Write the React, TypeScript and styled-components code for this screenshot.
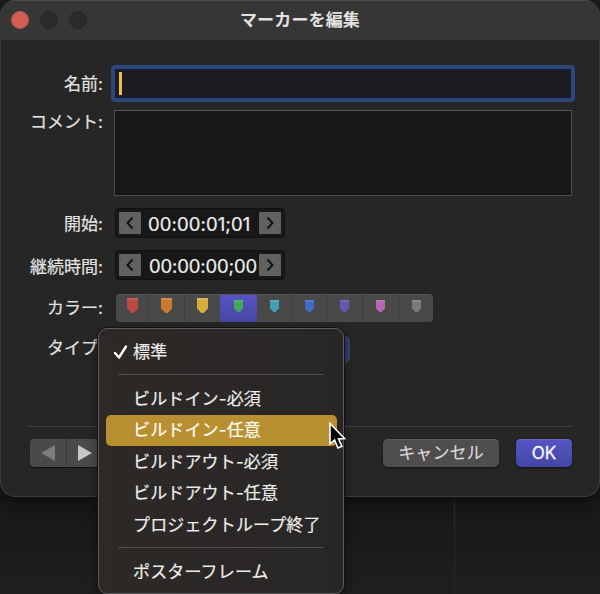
import React from 'react';
import styled, { createGlobalStyle } from 'styled-components';

const Global = createGlobalStyle`
  * { box-sizing: border-box; }
  body { margin: 0; background: #1c1c1c; overflow: hidden; }
  button { font: inherit; letter-spacing: inherit; padding: 0; border: 0; color: inherit; }
`;

const Desktop = styled.main`
  position: relative;
  width: 600px;
  height: 594px;
  overflow: hidden;
  background: linear-gradient(#1b1c20 0, #1b1b1b 20px, #171717 500px, #1f1f1f 594px);
  color: #e2e2e2;
  font: 400 17px/24px Inter, 'Noto Sans CJK JP', sans-serif;
  letter-spacing: 0.15px;
  -webkit-text-stroke: 0.2px;
`;

const PanelEdge = styled.div`
  position: absolute;
  left: 454px;
  top: 497px;
  width: 1px;
  height: 97px;
  background: #282828;
`;

const Dialog = styled.section`
  position: relative;
  height: 497px;
  border-radius: 15px;
  background: #262626;
  overflow: hidden;
  box-shadow: inset 0 0 0 1px #3c3c3c, 0 3px 12px #0008;
`;

const TitleBar = styled.header`
  display: grid;
  grid-template-columns: 100px 1fr 100px;
  align-items: center;
  height: 40px;
  background: #363636;
  border-top: 1px solid #484848;
`;

const Lights = styled.div`
  display: flex;
  gap: 11px;
  padding: 0 0 1px 11px;
`;

const Light = styled.i<{ $active?: boolean }>`
  width: 18px;
  height: 18px;
  border-radius: 50%;
  background: ${p => (p.$active ? '#d15d53' : '#2a2a2a')};
  border: 1px solid ${p => (p.$active ? '#b9544c' : '#272727')};
`;

const Title = styled.h1`
  margin: 0;
  padding-bottom: 2px;
  text-align: center;
  font-size: 17px;
  line-height: 24px;
  font-weight: 700;
  -webkit-text-stroke: 0;
`;

const Form = styled.div`
  display: grid;
  grid-template-columns: 103px 464px;
  grid-template-rows: 45px 98px 42px 44px 42px 90px;
  column-gap: 8px;
  padding-top: 25px;
`;

const Label = styled.label<{ $drop?: number }>`
  text-align: right;
  white-space: nowrap;
  letter-spacing: 0;
  padding-top: ${p => p.$drop ?? 0}px;
`;

const NameField = styled.div`
  display: flex;
  align-items: center;
  height: 37px;
  padding-left: 4px;
  border: 4px solid #2c4677;
  border-radius: 4px;
  background: #1c1b1f;
  box-shadow: inset 0 0 0 1px #14183a;
`;

const Caret = styled.i`
  width: 3px;
  height: 23px;
  background: #f0bd48;
`;

const Comment = styled.div`
  margin-left: 3px;
  width: 458px;
  height: 86px;
  border: 1px solid #4b4b4b;
  border-top-color: #595959;
  background: #171717;
`;

const TimeBox = styled.div`
  display: flex;
  align-items: center;
  width: 170px;
  height: 30px;
  margin-left: 4px;
  padding: 0 3px 1px 3px;
  border: 1px solid #101010;
  border-radius: 4px;
  background: #181818;
`;

const Step = styled.button`
  display: grid;
  place-items: center;
  flex: none;
  width: 22px;
  height: 22px;
  border-radius: 1px;
  background: #616161;
`;

const Time = styled.span<{ $tight?: boolean }>`
  flex: 1;
  white-space: nowrap;
  padding: 3px 0 0 ${p => (p.$tight ? 8 : 7)}px;
  font-size: 18.5px;
  letter-spacing: ${p => (p.$tight ? -0.15 : 0.1)}px;
  color: #efefef;
`;

const Swatches = styled.div`
  display: grid;
  grid-template-columns: 33px 36px 35px 37px 35px 35px 36px 36px 34px;
  width: 317px;
  height: 28px;
  margin-left: 5px;
  border-radius: 4px;
  overflow: hidden;
  background: #494949;
  border-top: 1px solid #555;
`;

const Swatch = styled.button<{ $on?: boolean; $line?: boolean; $top: number }>`
  display: flex;
  justify-content: center;
  align-items: flex-start;
  padding-top: ${p => p.$top}px;
  background: ${p => (p.$on ? 'linear-gradient(#5654c5, #4547a2)' : 'transparent')};
  border-right: ${p => (p.$line ? 1 : 0)}px solid #3e3e3e;
`;

const PopUp = styled.div`
  width: 235px;
  height: 27px;
  margin-left: 4px;
  border: 1px solid #4b4b50;
  border-radius: 5px;
  background: linear-gradient(90deg, #494949 205px, #333d78 205px);
`;

const Rule = styled.hr`
  height: 1px;
  margin: 0 28px;
  border: 0;
  background: #404040;
`;

const Footer = styled.footer`
  display: flex;
  align-items: center;
  padding: 12px 28px 0 30px;
`;

const Nav = styled.div`
  display: flex;
  margin-right: auto;
  border-radius: 4px;
  background: #4a4a4a;
  overflow: hidden;
  box-shadow: 0 1px 1px #111;
`;

const NavButton = styled.button`
  display: grid;
  place-items: center;
  width: 36px;
  height: 28px;
  background: transparent;
  & + & { border-left: 1px solid #3b3b3b; }
`;

const Action = styled.button<{ $primary?: boolean }>`
  width: ${p => (p.$primary ? 56 : 116)}px;
  height: 28px;
  margin-left: ${p => (p.$primary ? 17 : 0)}px;
  border-radius: 5px;
  -webkit-text-stroke: ${p => (p.$primary ? 0.35 : 0.15)}px;
  color: ${p => (p.$primary ? '#f5f5ff' : '#dcd8d9')};
  background: ${p => (p.$primary ? 'linear-gradient(#5556c6, #4446a2)' : '#504d4e')};
  box-shadow: 0 1px 2px #111, inset 0 1px ${p => (p.$primary ? '#6769cf' : '#605d5e')};
`;

const Menu = styled.div`
  position: absolute;
  left: 98px;
  top: 328px;
  width: 246px;
  height: 266px;
  padding: 7px 6px 8px 7px;
  border: 1px solid #5f5d5c;
  border-radius: 9px;
  background: linear-gradient(90deg, #2c2927, #292726);
  box-shadow: 0 0 0 1px #111, 0 4px 12px #0007;
  color: #eeedeb;
`;

const Item = styled.div<{ $hot?: boolean }>`
  display: grid;
  grid-template-columns: 27px 1fr;
  align-items: center;
  height: 31.4px;
  border-radius: 5px;
  white-space: nowrap;
  background: ${p => (p.$hot ? '#b99031' : 'transparent')};
  color: ${p => (p.$hot ? '#fffdf5' : 'inherit')};
  & > span { grid-column: 2; }
  & > svg { justify-self: end; margin-right: 5px; }
`;

const Divider = styled.hr`
  height: 1px;
  margin: 7px 13px 8px 12px;
  border: 0;
  background: #504e4c;
`;

const Pointer = styled.svg`
  position: absolute;
  left: 328px;
  top: 421px;
`;

const Chevron = ({ right }: { right?: boolean }) => (
  <svg width="22" height="22" viewBox="0 0 22 22" fill="none" stroke="#111" strokeWidth="1.9">
    <path d={right ? 'M8.5 5.5 13.5 11l-5 5.5' : 'M13.5 5.5 8.5 11l5 5.5'} />
  </svg>
);

const Marker = ({ color, large }: { color: string; large?: boolean }) => (
  <svg width={large ? 11 : 9} height={large ? 15 : 12} viewBox="0 0 10 14" preserveAspectRatio="none">
    <path d="M0 0h10v9.5L6.2 14H3.8L0 9.5Z" fill={color} />
    <path d="M0 0h10v2H0Z" fill="#fff" opacity=".12" />
  </svg>
);

const colors = ['#bd4743', '#cb7930', '#d6ad3c', '#42a85c', '#42a0b2', '#426ac4', '#6753b0', '#b766b6', '#7b7b7b'];

export default function App() {
  return (
    <>
      <Global />
      <Desktop>
        <PanelEdge />
        <Dialog>
          <TitleBar>
            <Lights><Light $active /><Light /><Light /></Lights>
            <Title>マーカーを編集</Title>
          </TitleBar>
          <Form>
            <Label $drop={7}>名前:</Label>
            <NameField><Caret /></NameField>
            <Label>コメント:</Label>
            <Comment />
            <Label $drop={4}>開始:</Label>
            <TimeBox><Step><Chevron /></Step><Time>00:00:01;01</Time><Step><Chevron right /></Step></TimeBox>
            <Label $drop={5}>継続時間:</Label>
            <TimeBox><Step><Chevron /></Step><Time $tight>00:00:00;00</Time><Step><Chevron right /></Step></TimeBox>
            <Label $drop={2}>カラー:</Label>
            <Swatches>
              {colors.map((c, i) => (
                <Swatch key={c} $on={i === 3} $line={i !== 2 && i !== 3 && i !== 8} $top={i < 3 ? 3 : 5}>
                  <Marker color={c} large={i < 3} />
                </Swatch>
              ))}
            </Swatches>
            <Label>タイプ:</Label>
            <PopUp />
          </Form>
          <Rule />
          <Footer>
            <Nav>
              <NavButton><svg width="14" height="16"><path d="M14 0v16L0 8Z" fill="#7d7d7d" /></svg></NavButton>
              <NavButton><svg width="14" height="16"><path d="M0 0v16L14 8Z" fill="#c8c8c8" /></svg></NavButton>
            </Nav>
            <Action>キャンセル</Action>
            <Action $primary>OK</Action>
          </Footer>
        </Dialog>
        <Menu>
          <Item>
            <svg width="15" height="16" viewBox="0 0 15 16" fill="none" stroke="#fff" strokeWidth="2.4" strokeLinecap="round" strokeLinejoin="round"><path d="m2 9 4 4.5L13 2.5" /></svg>
            <span>標準</span>
          </Item>
          <Divider />
          <Item><span>ビルドイン-必須</span></Item>
          <Item $hot><span>ビルドイン-任意</span></Item>
          <Item><span>ビルドアウト-必須</span></Item>
          <Item><span>ビルドアウト-任意</span></Item>
          <Item><span>プロジェクトループ終了</span></Item>
          <Divider />
          <Item><span>ポスターフレーム</span></Item>
        </Menu>
        <Pointer width="20" height="30" viewBox="0 0 20 30">
          <path d="M2 2.5v20.3l4.6-3.8 3.4 8 3.9-1.7-3.4-7.4 6-.4Z" fill="#000" stroke="#fff" strokeWidth="1.6" />
        </Pointer>
      </Desktop>
    </>
  );
}
